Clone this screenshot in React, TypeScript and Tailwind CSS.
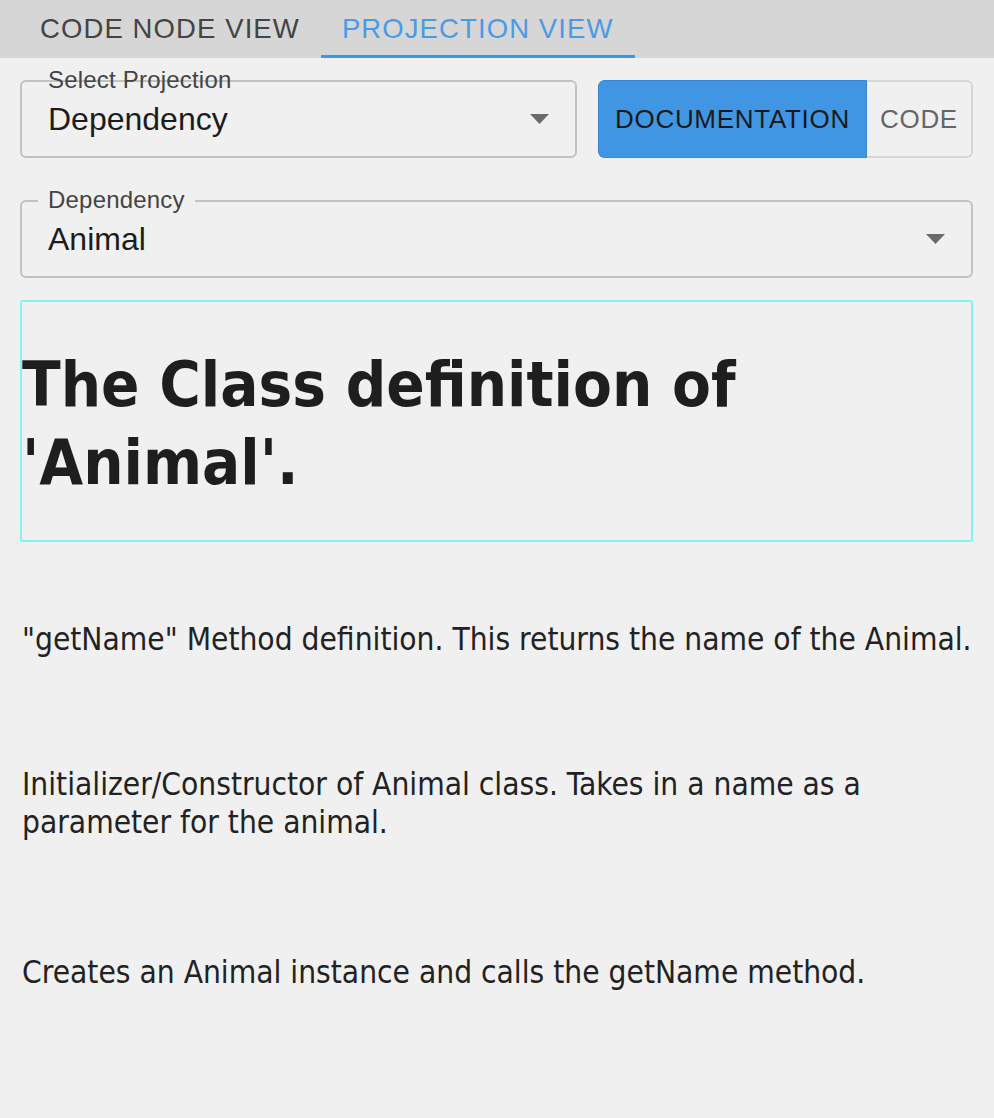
import React from "react";

const uiFont = { fontFamily: '"Liberation Sans", Arial, sans-serif' };
const docFont = {
  fontFamily: '"DejaVu Sans Condensed", "DejaVu Sans", Verdana, sans-serif',
  fontStretch: "condensed",
};

function Caret() {
  return (
    <svg width="19" height="10" viewBox="0 0 19 10" className="shrink-0">
      <path d="M0 0 L19 0 L9.5 10 Z" fill="#6b6b6b" />
    </svg>
  );
}

type SelectProps = {
  label: string;
  value: string;
  notched?: boolean;
  className?: string;
};

function OutlinedSelect({ label, value, notched = true, className = "" }: SelectProps) {
  return (
    <div
      className={`relative flex h-[78px] items-center justify-between rounded-[6px] border-2 border-[#c2c2c2] pl-[26px] pr-[26px] ${className}`}
    >
      <span
        className={`absolute top-[-14px] text-[24px] leading-[24px] tracking-[0.2px] text-[#444] ${
          notched ? "left-[16px] bg-[#f0f0f0] px-[10px]" : "left-[26px]"
        }`}
      >
        {label}
      </span>
      <span className="text-[32px] leading-none text-[#1c1c1c]">{value}</span>
      <Caret />
    </div>
  );
}

const notes = [
  { text: "\"getName\" Method definition. This returns the name of the Animal.", mt: "mt-[78px]" },
  { text: "Initializer/Constructor of Animal class. Takes in a name as a parameter for the animal.", mt: "mt-[107px]" },
  { text: "Creates an Animal instance and calls the getName method.", mt: "mt-[112px]" },
];

export default function App() {
  return (
    <div className="min-h-[1118px] w-[994px] bg-[#f0f0f0]" style={uiFont}>
      <div className="flex h-[58px] bg-[#d6d6d6] pl-[19px]">
        <div className="flex items-center px-[21px] pb-[1px] text-[27.5px] tracking-[1.1px] text-[#444]">
          CODE NODE VIEW
        </div>
        <div className="flex items-center border-b-[3px] border-[#4096e3] px-[21px] pt-[2px] text-[27.5px] tracking-[1.1px] text-[#4a9be6]">
          PROJECTION VIEW
        </div>
      </div>

      <div className="px-[20px] pr-[21px]">
        <div className="mt-[22px] flex gap-[21px]">
          <OutlinedSelect
            label="Select Projection"
            value="Dependency"
            notched={false}
            className="w-[557px]"
          />
          <div className="flex h-[78px] flex-1 overflow-hidden rounded-[6px]">
            <div className="flex items-center rounded-l-[6px] border border-[#3a86cf] bg-[#4096e3] px-[16px] text-[26px] tracking-[0.7px] text-[#1a1a1a]">
              DOCUMENTATION
            </div>
            <div className="flex flex-1 items-center justify-center rounded-r-[6px] border-2 border-l-0 border-[#d6d6d6] text-[26px] tracking-[0.7px] text-[#666]">
              CODE
            </div>
          </div>
        </div>

        <OutlinedSelect label="Dependency" value="Animal" className="mt-[42px]" />

        <div className="mt-[22px] rounded-[3px] border-2 border-[#80f4f4] px-0" style={docFont}>
          <h1 className="mb-[38px] mt-[44px] text-[63px] font-bold leading-[78px] text-[#1e1e1e]">
            The Class definition of
            <br />
            'Animal'.
          </h1>
        </div>

        <div style={docFont} className="pl-[2px] text-[31.4px] leading-[38px] text-[#222]">
          {notes.map((n) => (
            <p key={n.text} className={n.mt}>
              {n.text}
            </p>
          ))}
        </div>
      </div>
    </div>
  );
}
